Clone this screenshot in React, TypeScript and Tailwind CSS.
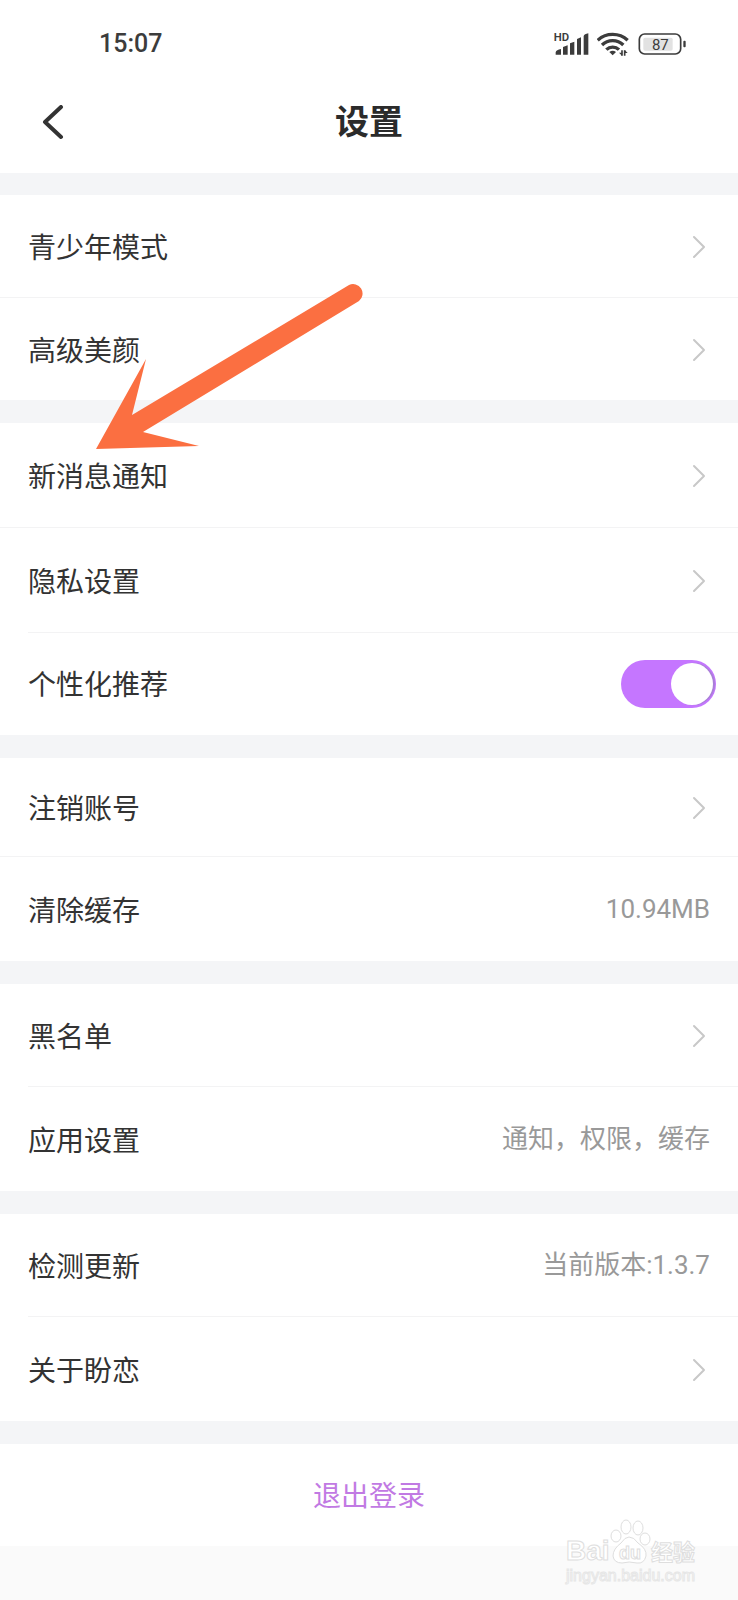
import React, { useState } from 'react';
import { clsx } from 'clsx';

interface Item {
    label: string;
    value?: string;
    toggle?: boolean;
    height: string;
    inset?: boolean;
}

const GROUPS: Item[][] = [
    [
        { label: '青少年模式', height: 'h-[102px]' },
        { label: '高级美颜', height: 'h-[102px]' },
    ],
    [
        { label: '新消息通知', height: 'h-[104px]' },
        { label: '隐私设置', height: 'h-[104px]' },
        { label: '个性化推荐', height: 'h-[102px]', toggle: true, inset: true },
    ],
    [
        { label: '注销账号', height: 'h-[98px]' },
        { label: '清除缓存', height: 'h-[104px]', value: '10.94MB' },
    ],
    [
        { label: '黑名单', height: 'h-[102px]' },
        { label: '应用设置', height: 'h-[104px]', value: '通知，权限，缓存', inset: true },
    ],
    [
        { label: '检测更新', height: 'h-[102px]', value: '当前版本:1.3.7' },
        { label: '关于盼恋', height: 'h-[104px]', inset: true },
    ],
];

const StatusIcons = () => (
    <div className="flex items-center gap-2 text-[#3c3c3c]">
        {/* HD + signal */}
        <svg className="w-9 h-[26px]" viewBox="553 93 108 78" fill="currentColor">
            <text x="555" y="124" fontSize="34" fontWeight="600" fontFamily="Roboto, sans-serif">HD</text>
            <path d="M561 164v-7q2-8 16-10v17zM583 164v-23l14-5v28zM604 164v-34l13-5v39zM625 164v-47l12-5v52zM645 164v-56q2-6 14-8v64z" />
        </svg>
        {/* wifi */}
        <svg className="w-[33px] h-[26px]" viewBox="685 93 99 78" fill="none" stroke="currentColor" strokeWidth="10">
            <path d="M687 121a66 66 0 0 1 90 0M700 135a46 46 0 0 1 64 0M713 149a27 27 0 0 1 38 0" />
            <path d="M722 156q10-8 20 0l-10 10z" fill="currentColor" stroke="none" />
            <path d="M760 151v16M768 151v16" strokeWidth="5" />
            <path d="M751 158l9 9v-9zM777 159l-9-9v9z" fill="currentColor" stroke="none" />
        </svg>
        {/* battery */}
        <svg className="w-[49px] h-[26px]" viewBox="808 92 147 78" fill="none">
            <rect x="812" y="101" width="124" height="60" rx="16" stroke="currentColor" strokeWidth="5" />
            <rect x="824" y="112" width="88" height="39" rx="5" fill="#e2e2e2" />
            <rect x="944" y="121" width="7" height="20" rx="3" fill="currentColor" />
            <text x="875" y="148" fontSize="45" fontWeight="400" textAnchor="middle" fill="currentColor" fontFamily="Roboto, sans-serif">87</text>
        </svg>
    </div>
);

const Chevron = () => (
    <svg className="w-[14px] h-6 mr-1" viewBox="0 0 14 24" fill="none" stroke="#c8c8c8" strokeWidth="2" strokeLinecap="round" strokeLinejoin="round">
        <path d="M2 2l10 10L2 22" />
    </svg>
);

const Row = ({ item, on, onToggle }: { item: Item; on: boolean; onToggle: () => void }) => {
    const rowClass = clsx('w-full flex items-center justify-between pl-7 text-left', item.height);

    if (item.toggle) {
        return (
            <label className={clsx(rowClass, 'pr-[22px]')}>
                <span className="pt-1">{item.label}</span>
                <input
                    type="checkbox"
                    role="switch"
                    checked={on}
                    onChange={onToggle}
                    className="appearance-none flex items-center justify-start checked:justify-end w-[95px] h-12 px-[3px] rounded-full bg-[#dddddd] checked:bg-[#c576ff] before:block before:size-[42px] before:rounded-full before:bg-white before:shadow-[2px_0_1px_#a87fd6]"
                />
            </label>
        );
    }

    return (
        <button className={clsx(rowClass, 'pt-px pr-7')}>
            <span className="pt-1">{item.label}</span>
            {item.value ? <span className="text-[26px] text-[#999999]">{item.value}</span> : <Chevron />}
        </button>
    );
};

const Pointer = () => (
    <svg className="absolute left-[94px] top-[280px] w-[272px] h-[172px] pointer-events-none" viewBox="94 280 272 172" fill="#fb6f41">
        <path d="M96 449L146 359L132 415L349 285A9.5 9.5 0 0 1 359 301L143 432L199 446Z" />
    </svg>
);

const Watermark = () => (
    <svg className="absolute right-9 bottom-3 w-[140px] h-[72px] pointer-events-none" viewBox="562 1516 140 72" fill="#ffffff" stroke="#dedede" strokeWidth="1" fontFamily="'Liberation Sans', 'Noto Sans CJK SC', sans-serif" fontWeight="700">
        <text x="566" y="1560" fontSize="28">Bai</text>
        <ellipse cx="616" cy="1536" rx="5" ry="6" />
        <ellipse cx="626" cy="1527" rx="5" ry="7" />
        <ellipse cx="638" cy="1528" rx="5" ry="7" />
        <ellipse cx="645" cy="1539" rx="5" ry="6" />
        <path d="M629 1537q5 0 9 6q9 6 8 13q-2 8-9 7q-8-2-15 0q-8 0-9-7q0-7 8-13q4-6 8-6z" />
        <text x="619" y="1559" fontSize="18">du</text>
        <text x="651" y="1560" fontSize="22">经验</text>
        <text x="566" y="1581" fontSize="16" fontWeight="400" stroke="#e6e6e6">jingyan.baidu.com</text>
    </svg>
);

export default function App() {
    const [recommend, setRecommend] = useState(true);

    return (
        <div className="relative min-h-screen bg-[#fafafa] text-[28px] text-[#333333] font-[Roboto,'Noto_Sans_CJK_SC',sans-serif]">
            <header className="bg-white">
                <div className="h-[72px] pt-4 pl-[99px] pr-[51px] flex items-center justify-between">
                    <span className="text-[25px] font-medium text-[#3c3c3c]">15:07</span>
                    <StatusIcons />
                </div>
                <div className="h-[101px] px-10 grid grid-cols-[1fr_auto_1fr] items-center">
                    <button aria-label="返回" className="justify-self-start">
                        <svg className="w-6 h-9" viewBox="0 0 24 36" fill="none" stroke="#333333" strokeWidth="4" strokeLinecap="round" strokeLinejoin="round">
                            <path d="M21 2L5 17L21 32" />
                        </svg>
                    </button>
                    <h1 className="text-[34px] font-bold text-[#2b2b2b]">设置</h1>
                </div>
            </header>

            <main className="flex flex-col gap-[23px] pt-[22px] bg-[#f4f5f7]">
                {GROUPS.map((group, g) => (
                    <section key={g} className="bg-white">
                        {group.map((item, i) => (
                            <React.Fragment key={item.label}>
                                {i > 0 && <div className={clsx('h-px bg-[#f3f3f4]', item.inset && 'ml-7')} />}
                                <Row item={item} on={recommend} onToggle={() => setRecommend(!recommend)} />
                            </React.Fragment>
                        ))}
                    </section>
                ))}
                <button className="h-[102px] pt-1 bg-white text-[#c17ae3]">退出登录</button>
            </main>

            <Pointer />
            <Watermark />
        </div>
    );
}
